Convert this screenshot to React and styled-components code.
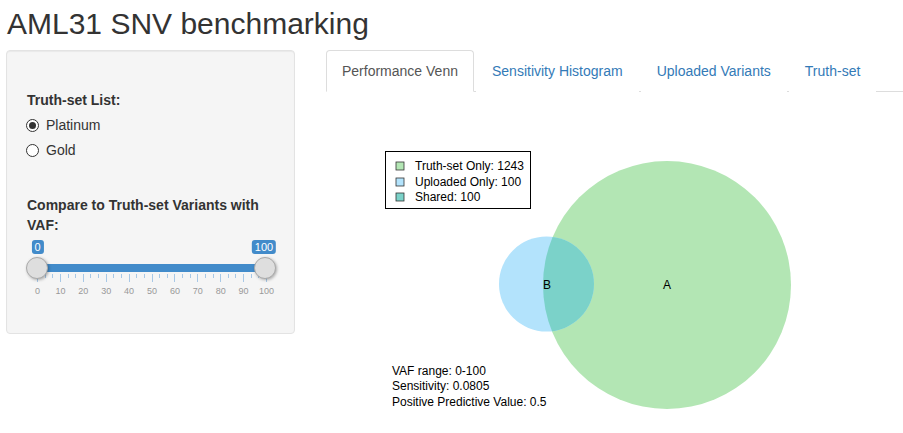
import React from 'react';
import styled, { createGlobalStyle } from 'styled-components';

const GlobalStyle = createGlobalStyle`
  body {
    margin: 0;
    background: #fff;
    font-family: "Liberation Sans", Arial, sans-serif;
    font-size: 14px;
    line-height: 20px;
    color: #333;
  }
`;

const Page = styled.div`
  padding: 7px 0 0 6px;
`;

const Title = styled.h2`
  margin: 0 0 10px 1px;
  font-size: 30px;
  font-weight: 500;
  line-height: 33px;
  color: #333;
`;

const Row = styled.div`
  display: flex;
  gap: 31px;
  align-items: flex-start;
`;

const Sidebar = styled.div`
  width: 289px;
  box-sizing: border-box;
  padding: 39px 20px 33px 20px;
  background: #f5f5f5;
  border: 1px solid #e3e3e3;
  border-radius: 4px;
  box-shadow: inset 0 1px 1px rgba(0, 0, 0, 0.05);
`;

const FieldLabel = styled.div`
  font-weight: 700;
  margin-bottom: 5px;
`;

const RadioRow = styled.label`
  display: flex;
  align-items: center;
  gap: 7px;
  height: 20px;
  margin-bottom: 5px;
  margin-left: -1px;
`;

const RadioDot = styled.span`
  width: 13px;
  height: 13px;
  box-sizing: border-box;
  border-radius: 50%;
  border: 1px solid #333;
  background: #fff;
  display: flex;
  align-items: center;
  justify-content: center;
  &::after {
    content: '';
    width: 7px;
    height: 7px;
    border-radius: 50%;
    background: ${p => (p.checked ? '#333' : 'transparent')};
  }
`;

const Group = styled.div`
  margin-top: ${p => p.top || 0}px;
`;

const Slider = styled.div`
  position: relative;
  margin-left: -1px;
  width: 250px;
  height: 60px;
  margin-top: 4px;
`;

const Track = styled.div`
  position: absolute;
  left: 11px;
  right: 11px;
  top: 24px;
  height: 8px;
  background: #428bca;
`;

const Handle = styled.div`
  position: absolute;
  top: 17px;
  width: 22px;
  height: 22px;
  box-sizing: border-box;
  border-radius: 50%;
  border: 1px solid #aaa;
  background: #dedede;
  box-shadow: 1px 1px 3px rgba(0, 0, 0, 0.3);
`;

const ValueTag = styled.div`
  position: absolute;
  top: 0;
  transform: translateX(-50%);
  padding: 0 3px;
  height: 14px;
  line-height: 14px;
  font-size: 11px;
  color: #fff;
  background: #428bca;
  border-radius: 3px;
`;

const Tick = styled.div`
  position: absolute;
  top: 34px;
  width: 1px;
  height: ${p => (p.big ? 8 : 4)}px;
  background: #a8c8e6;
`;

const TickLabel = styled.div`
  position: absolute;
  top: 46px;
  transform: translateX(-50%);
  font-size: 9px;
  line-height: 10px;
  color: #999;
`;

const Main = styled.div`
  flex: 1;
`;

const Tabs = styled.div`
  display: flex;
  border-bottom: 1px solid #ddd;
`;

const Tab = styled.div`
  padding: 10px 15px;
  margin-right: 2px;
  margin-bottom: -1px;
  border: 1px solid ${p => (p.active ? '#ddd' : 'transparent')};
  border-bottom-color: ${p => (p.active ? '#fff' : 'transparent')};
  border-radius: 4px 4px 0 0;
  background: #fff;
  color: ${p => (p.active ? '#555' : '#337ab7')};
  white-space: nowrap;
`;

const Plot = styled.svg`
  display: block;
  font-family: "Liberation Sans", Arial, sans-serif;
`;

const SCALE_X0 = 11;
const SCALE_W = 229;

function RangeSlider() {
  const ticks = [];
  for (let i = 0; i <= 30; i++) {
    const x = SCALE_X0 + (SCALE_W * i) / 30;
    ticks.push(<Tick key={i} big={i % 3 === 0} style={{ left: x }} />);
  }
  const labels = [];
  for (let v = 0; v <= 100; v += 10) {
    labels.push(
      <TickLabel key={v} style={{ left: SCALE_X0 + (SCALE_W * v) / 100 + 0.5 }}>
        {v}
      </TickLabel>
    );
  }
  return (
    <Slider>
      <Track />
      {ticks}
      {labels}
      <Handle style={{ left: 0 }} />
      <Handle style={{ left: 228 }} />
      <ValueTag style={{ left: 11.5 }}>0</ValueTag>
      <ValueTag style={{ left: 238 }}>100</ValueTag>
    </Slider>
  );
}

function VennPlot() {
  const green = '#b3e6b4';
  const blue = '#b3e3fc';
  const shared = '#7bd2c9';
  return (
    <Plot width="577" height="341" viewBox="0 0 577 341">
      <defs>
        <clipPath id="clipA">
          <circle cx="341" cy="193" r="124" />
        </clipPath>
      </defs>
      <circle cx="341" cy="193" r="124" fill={green} />
      <circle cx="220.5" cy="192" r="47.5" fill={blue} />
      <circle cx="220.5" cy="192" r="47.5" fill={shared} clipPath="url(#clipA)" />
      <text x="221" y="197" fontSize="12" textAnchor="middle" fill="#000">B</text>
      <text x="341" y="197" fontSize="12" textAnchor="middle" fill="#000">A</text>

      <rect x="59.5" y="59.5" width="145" height="57" fill="#fff" stroke="#000" />
      <rect x="70" y="70" width="8" height="8" fill={green} stroke="#333" strokeWidth="0.8" />
      <rect x="70" y="86" width="8" height="8" fill={blue} stroke="#333" strokeWidth="0.8" />
      <rect x="70" y="101" width="8" height="8" fill={shared} stroke="#333" strokeWidth="0.8" />
      <text x="89" y="78" fontSize="12" fill="#000">Truth-set Only: 1243</text>
      <text x="89" y="94" fontSize="12" fill="#000">Uploaded Only: 100</text>
      <text x="89" y="109" fontSize="12" fill="#000">Shared: 100</text>

      <text x="66" y="283" fontSize="12" fill="#000">VAF range: 0-100</text>
      <text x="66" y="298" fontSize="12" fill="#000">Sensitivity: 0.0805</text>
      <text x="66" y="314" fontSize="12" fill="#000">Positive Predictive Value: 0.5</text>
    </Plot>
  );
}

export default function App() {
  return (
    <Page>
      <GlobalStyle />
      <Title>AML31 SNV benchmarking</Title>
      <Row>
        <Sidebar>
          <FieldLabel>Truth-set List:</FieldLabel>
          <RadioRow>
            <RadioDot checked />
            Platinum
          </RadioRow>
          <RadioRow>
            <RadioDot />
            Gold
          </RadioRow>
          <Group top={35}>
            <FieldLabel>Compare to Truth-set Variants with VAF:</FieldLabel>
            <RangeSlider />
          </Group>
        </Sidebar>
        <Main>
          <Tabs>
            <Tab active>Performance Venn</Tab>
            <Tab>Sensitivity Histogram</Tab>
            <Tab>Uploaded Variants</Tab>
            <Tab>Truth-set</Tab>
          </Tabs>
          <VennPlot />
        </Main>
      </Row>
    </Page>
  );
}
